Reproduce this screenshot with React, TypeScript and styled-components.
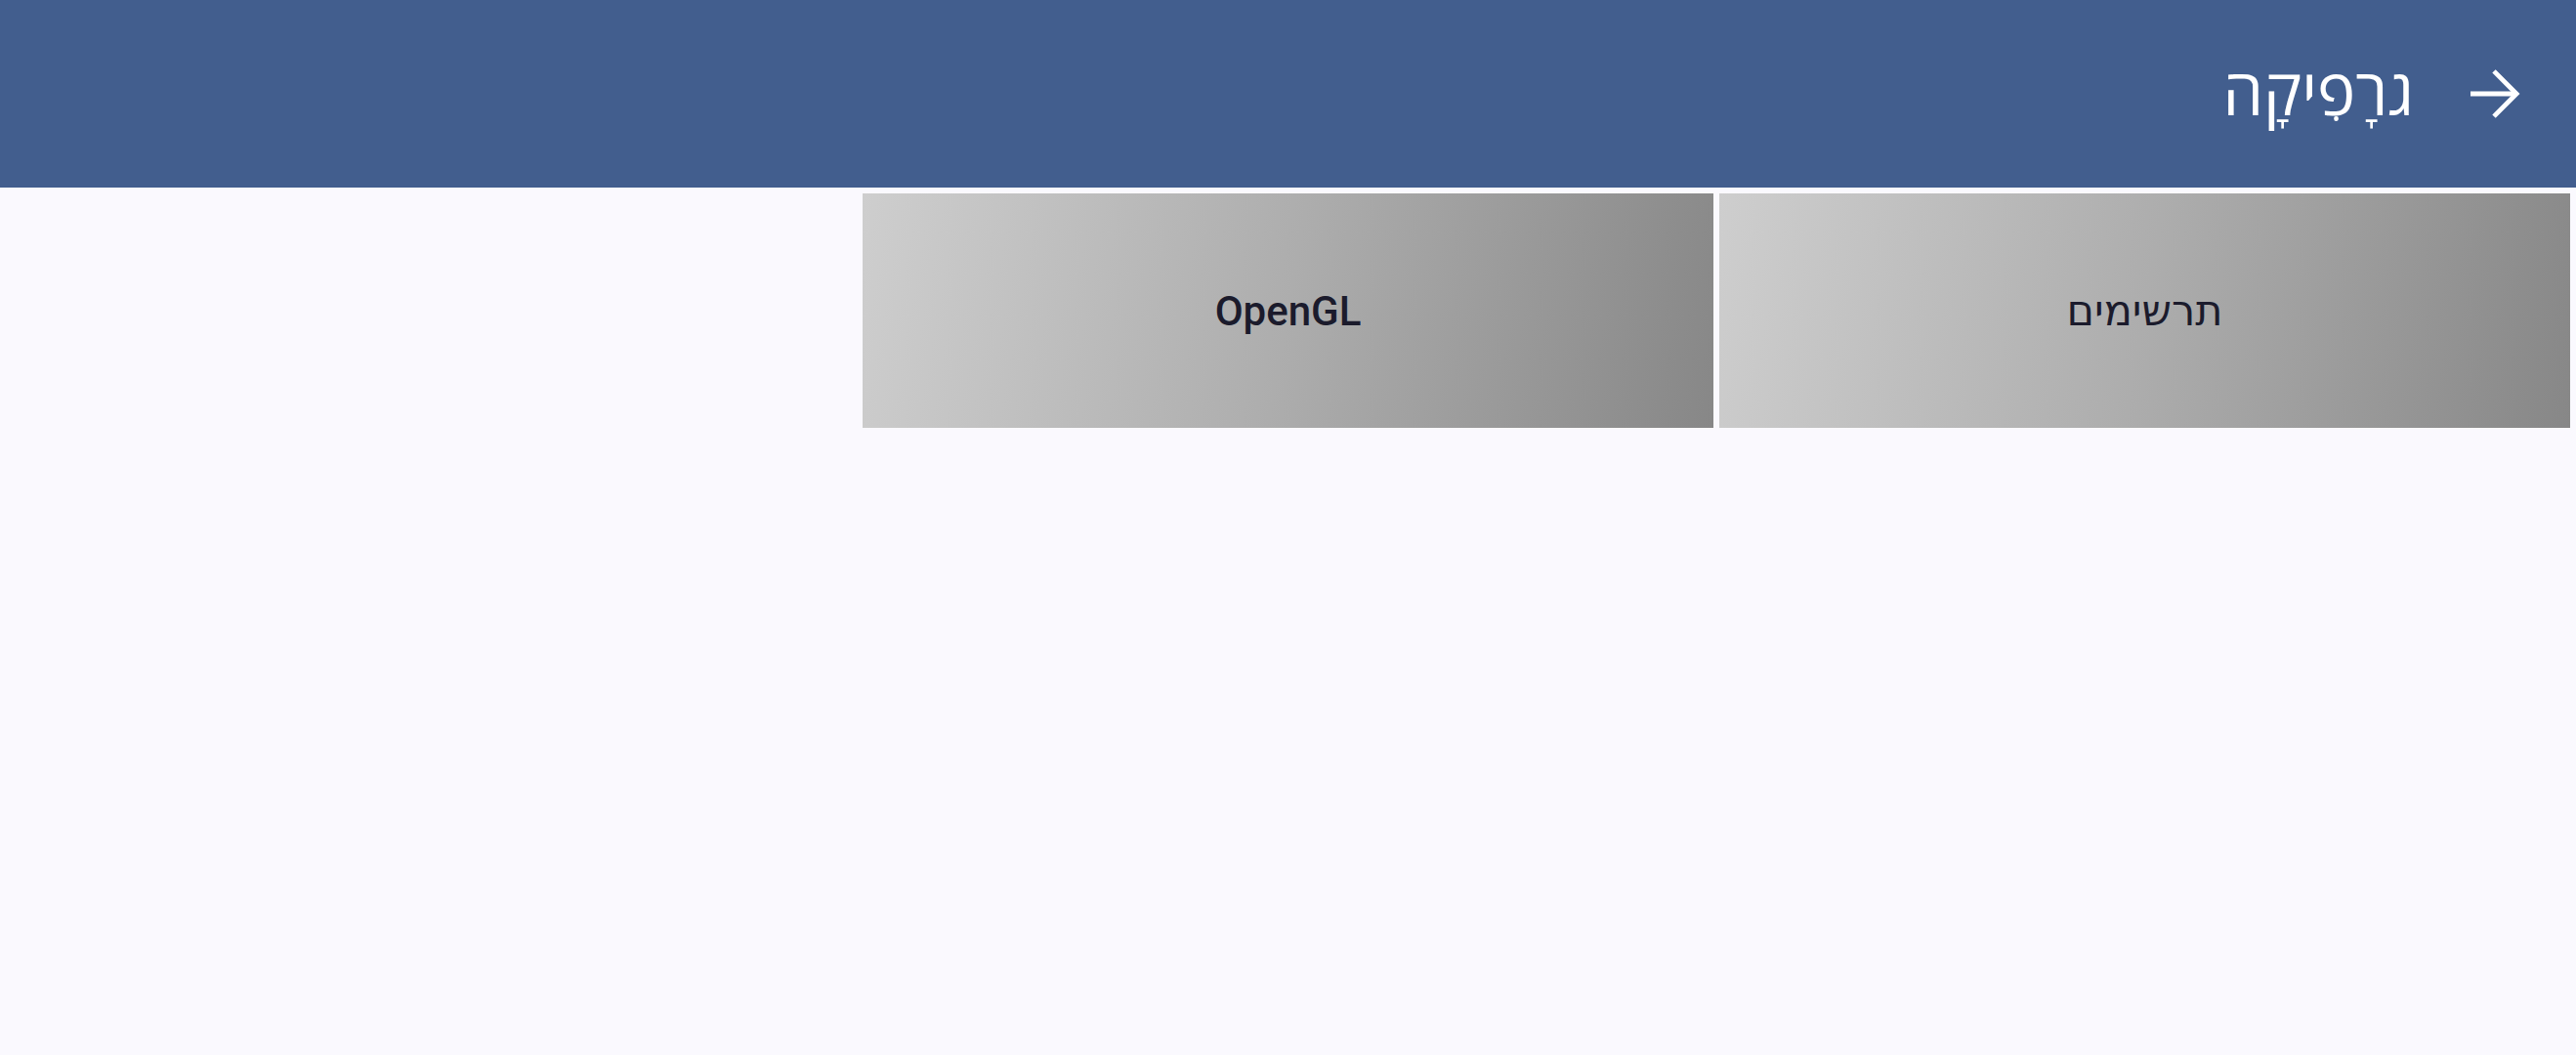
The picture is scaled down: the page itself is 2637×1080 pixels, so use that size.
import React from 'react';
import styled, { createGlobalStyle } from 'styled-components';

const GlobalStyle = createGlobalStyle`
    html, body {
        margin: 0;
        padding: 0;
        background: #faf9fe;
        direction: rtl;
    }
    body {
        font-family: Roboto, "Noto Sans", "Open Sans", "DejaVu Sans", sans-serif;
        min-height: 1080px;
    }
`;

const Page = styled.div`
    display: flex;
    flex-direction: column;
    min-height: 1080px;
    background: #faf9fe;
`;

const AppBar = styled.header`
    display: flex;
    align-items: center;
    height: 192px;
    padding-right: 48px;
    gap: 46px;
    background: #425e8e;
    color: #ffffff;
`;

const BackButton = styled.button`
    display: flex;
    align-items: center;
    justify-content: center;
    width: 72px;
    height: 72px;
    padding: 0;
    border: none;
    background: transparent;
    color: #ffffff;
    cursor: pointer;
`;

const Title = styled.h1`
    margin: 0;
    font-size: 66px;
    font-weight: 500;
    line-height: 1;
`;

const Grid = styled.div`
    display: grid;
    grid-template-columns: repeat(3, 1fr);
    gap: 6px;
    padding: 6px;
`;

const Tile = styled.button<{ $latin?: boolean }>`
    display: flex;
    align-items: center;
    justify-content: center;
    height: 240px;
    padding: 0;
    border: none;
    background: linear-gradient(100deg, #cecece 0%, #adadad 50%, #878787 100%);
    color: #1b1b2c;
    font-family: Roboto, "Noto Sans", "DejaVu Sans", sans-serif;
    font-size: ${(p) => (p.$latin ? '42px' : '43px')};
    font-weight: ${(p) => (p.$latin ? 500 : 400)};
    cursor: pointer;
`;

const ArrowIcon = () => (
    <svg width="72" height="72" viewBox="0 0 24 24" fill="none" stroke="currentColor" strokeWidth="1.6" strokeLinecap="butt" strokeLinejoin="miter">
        <path d="M4 12h15.5" />
        <path d="M12 4.3l7.7 7.7-7.7 7.7" />
    </svg>
);

const items = [
    { label: 'תרשימים', latin: false },
    { label: 'OpenGL', latin: true },
];

export default function App() {
    return (
        <Page>
            <GlobalStyle />
            <AppBar>
                <BackButton aria-label="חזרה">
                    <ArrowIcon />
                </BackButton>
                <Title>גרָפִיקָה</Title>
            </AppBar>
            <Grid>
                {items.map((item) => (
                    <Tile key={item.label} $latin={item.latin}>
                        {item.label}
                    </Tile>
                ))}
            </Grid>
        </Page>
    );
}
